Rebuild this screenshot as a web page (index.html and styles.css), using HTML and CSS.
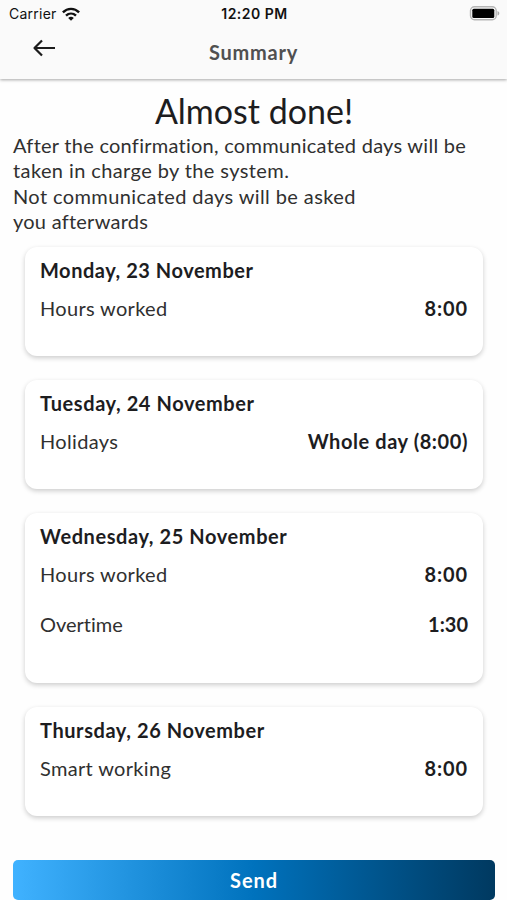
FILE: index.html
```html
<!DOCTYPE html>
<html lang="en">
<head>
<meta charset="utf-8">
<title>Summary</title>
<link rel="stylesheet" href="styles.css">
</head>
<body>
<div class="screen">
  <header class="header">
    <div class="status">
      <div class="carrier"><span class="carrier-name">Carrier</span>
        <svg class="wifi" viewBox="0 0 18 14" width="18" height="14"><g fill="none" stroke="#111" stroke-width="2.4"><path d="M.9 5.4C5.5.7 12.500.7 17.100 5.400"/><path d="M4 8.700c2.900-2.800 7.100-2.800 10 0"/></g><path fill="#111" d="M6.200 10.900c1.700-1.500 3.900-1.500 5.600 0L9 13.700z"/></svg>
      </div>
      <span class="time">12:20 PM</span>
      <svg class="battery" viewBox="0 0 31 15" width="31" height="15"><rect x="1.500" y=".8" width="25.700" height="13" rx="4" fill="#fafafa" stroke="#b5b5b5" stroke-width="1.400"/><rect x="3.300" y="2.700" width="22" height="9.200" rx="1.500" fill="#000"/><path d="M28.500 5c2.400.8 2.400 3.800 0 4.600z" fill="#aaa"/></svg>
    </div>
    <div class="nav">
      <svg class="back" viewBox="0 0 24 18" width="24" height="18"><path d="M10 1.500 2.500 9l7.500 7.500M2.500 9H23" fill="none" stroke="#1c1c1c" stroke-width="2.200" stroke-linejoin="round"/></svg>
      <span class="nav-title">Summary</span>
    </div>
  </header>
  <main class="content">
    <h1 class="title"><span>Almost done!</span></h1>
    <p class="intro"><span class="l1">After the confirmation, communicated days will be</span><br><span class="l2">taken in charge by the system.</span><br><span class="l3">Not communicated days will be asked</span><br><span class="l4">you afterwards</span></p>
    <div class="cards">
      <section class="card"><h2 class="d1">Monday, 23 November</h2><div class="row"><span class="hours">Hours worked</span><b>8:00</b></div></section>
      <section class="card"><h2 class="d2">Tuesday, 24 November</h2><div class="row"><span class="holidays">Holidays</span><b class="whole">Whole day (8:00)</b></div></section>
      <section class="card tall"><h2 class="d3">Wednesday, 25 November</h2><div class="row"><span class="hours">Hours worked</span><b>8:00</b></div><div class="row"><span class="overtime">Overtime</span><b class="half">1:30</b></div></section>
      <section class="card"><h2 class="d4">Thursday, 26 November</h2><div class="row"><span class="smart">Smart working</span><b>8:00</b></div></section>
    </div>
    <button class="send">Send</button>
  </main>
</div>
</body>
</html>
```
FILE: styles.css
```css
* { box-sizing: border-box; }
body { margin: 0; background: #fefefe; color: #1d1d1f; font-family: Lato, "Open Sans", sans-serif; font-variant-ligatures: none; }
.screen { height: 900px; overflow: hidden; }
.header { height: 79px; background: #fafafa; box-shadow: 0 1px 3px rgba(0,0,0,.35); }
.status { height: 27px; display: grid; grid-template-columns: 1fr auto 1fr; align-items: center; padding: 0 7px 0 9px; font: 14px/27px Inter, sans-serif; color: #111; }
.carrier { display: flex; align-items: center; gap: 5px; }
.carrier-name { letter-spacing: .25px; }
.time { font-weight: 600; letter-spacing: .5px; }
.battery { justify-self: end; }
.nav { height: 52px; display: grid; grid-template-columns: 1fr auto 1fr; padding: 0 0 0 32px; }
.back { margin-top: 12px; }
.nav-title { grid-column: 2; line-height: 51px; font-size: 20px; font-weight: 700; letter-spacing: .75px; color: #505050; margin-left: -32px; }
.content { padding: 13px 12px 0 13px; }
.title { margin: 0; height: 41px; line-height: 38px; font-size: 34px; font-weight: 400; text-align: center; }
.intro { margin: 0; height: 101px; font-size: 20px; line-height: 25.300px; white-space: nowrap; color: #303030; }
.l1 { letter-spacing: .26px; }
.l2, .l3 { letter-spacing: .4px; }
.l4 { letter-spacing: .25px; }
.cards { display: flex; flex-direction: column; gap: 24px; margin: 13px 12px 0; }
.card { height: 109px; padding: 10px 15px; border-radius: 12px; background: #fff; box-shadow: 0 2px 5px rgba(0,0,0,.2); }
.card.tall { height: 170px; }
.card h2 { margin: 0; line-height: 27px; font-size: 20px; font-weight: 700; letter-spacing: .58px; }
.card .d1 { letter-spacing: .53px; }
.row { display: flex; justify-content: space-between; height: 50px; line-height: 48px; font-size: 20px; letter-spacing: .33px; color: #303030; }
.row b { font-weight: 700; letter-spacing: .9px; color: #1d1d1f; }
.row .whole { letter-spacing: .57px; }
.row .half { letter-spacing: 0; }
.overtime { letter-spacing: 0; }
.send { display: block; width: 482px; height: 40px; margin-top: 44px; padding: 0; border: 0; border-radius: 5px; font: 700 20px/40px Lato, sans-serif; letter-spacing: .9px; color: #fff; background: linear-gradient(90deg, #40b2ff, #0072bd 50%, #003960); }
```
